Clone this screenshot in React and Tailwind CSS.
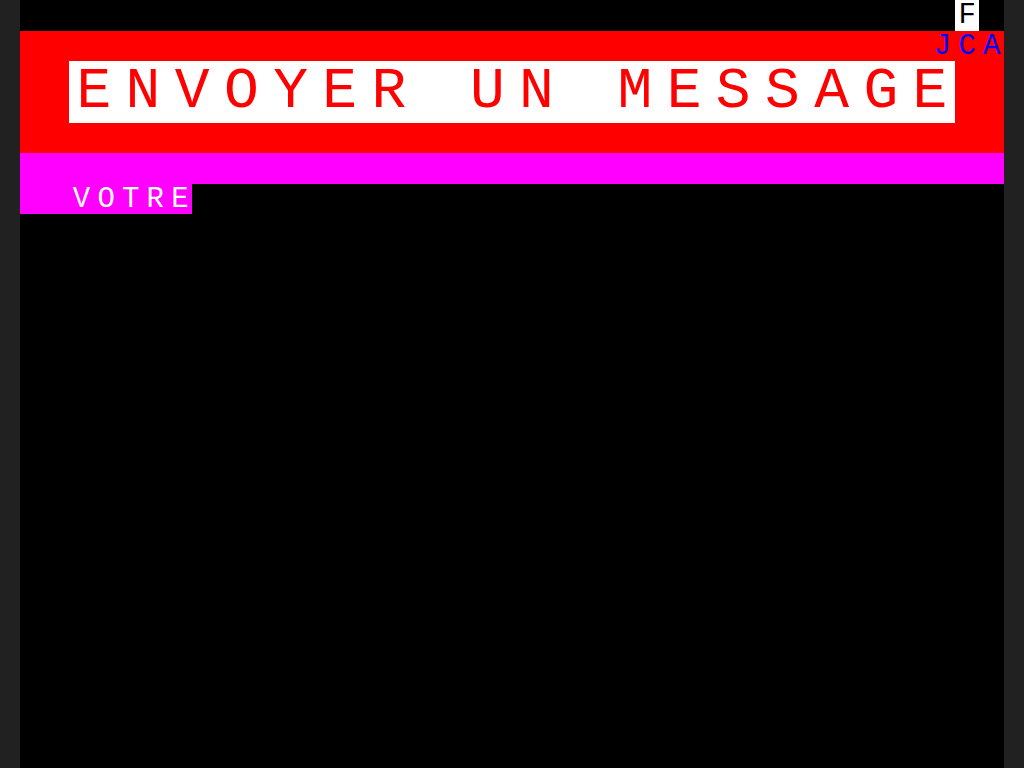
const CELL = "w-[24.6px]";
const DCELL = "w-[49.2px]";

function Chars({ text, double }) {
  return (
    <>
      {text.split("").map((c, i) => (
        <span key={i} className={`${double ? DCELL : CELL} shrink-0 text-center`}>
          {c === " " ? "\u00a0" : c}
        </span>
      ))}
    </>
  );
}

export default function App() {
  return (
    <div className="w-[1024px] h-[768px] bg-[#212121] px-[20px] font-['Liberation_Mono',monospace]">
      <div className="w-[984px] h-full bg-black flex flex-col">
        {/* row 0 */}
        <div className="h-[31px] flex justify-end pr-[24.6px]">
          <div className="h-[31px] bg-white text-black flex items-center text-[29px] leading-[29px]">
            <Chars text="F" />
          </div>
        </div>

        {/* header rows 1-4 */}
        <div className="h-[122px] bg-[#ff0000] flex flex-col">
          <div className="h-[30px] flex justify-end items-center text-[#0000ff] text-[29px] leading-[29px]">
            <Chars text="JCA" />
          </div>
          <div className="flex pl-[49.2px]">
            <div className="h-[62px] bg-white text-[#ff0000] flex items-center text-[58px] leading-[58px]">
              <Chars text="ENVOYER UN MESSAGE" double />
            </div>
          </div>
        </div>

        {/* row 5 */}
        <div className="h-[31px] bg-[#ff00ff]" />

        {/* row 6 */}
        <div className="h-[30px] flex">
          <div className="w-[172px] bg-[#ff00ff] text-white flex items-center pl-[49.2px] text-[29px] leading-[29px]">
            <Chars text="VOTRE" />
          </div>
        </div>
      </div>
    </div>
  );
}
